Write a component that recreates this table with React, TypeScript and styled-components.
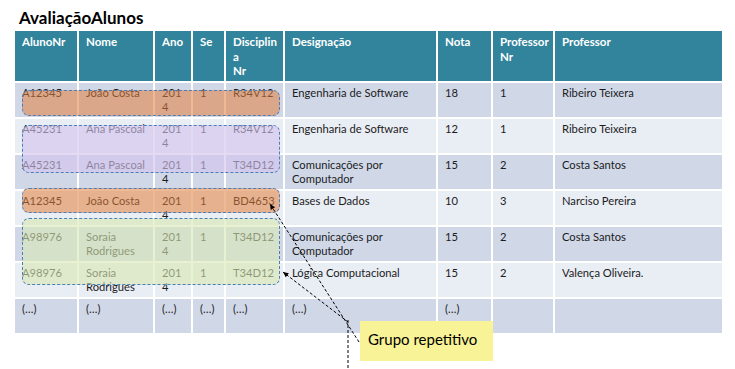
import styled, { createGlobalStyle } from "styled-components"

const GlobalStyle = createGlobalStyle`
  html, body {
    margin: 0;
    padding: 0;
    background: #ffffff;
  }
  body {
    font-family: Lato, "Open Sans", "Liberation Sans", sans-serif;
  }
`

const Page = styled.div`
  position: relative;
  width: 735px;
  height: 369px;
  overflow: hidden;
  padding: 6px 0 0 15px;
  box-sizing: border-box;
`

const Title = styled.h1`
  margin: 0 0 2px 4px;
  font-size: 17px;
  line-height: 23px;
  font-weight: bold;
  color: #000;
`

const Table = styled.div`
  display: grid;
  grid-template-columns: 62px 74px 36px 31px 57px 151px 53px 60px 167px;
  grid-template-rows: 50px repeat(7, 34px);
  gap: 2px;
  width: 707px;
  background: #ffffff;
`

const HeadCell = styled.div`
  background: #31849b;
  color: #ffffff;
  font-weight: bold;
  font-size: 11.5px;
  line-height: 14.5px;
  padding: 4px 7px 0;
  white-space: pre;
  overflow: hidden;
`

const Cell = styled.div<{ $dark: boolean }>`
  background: ${(p) => (p.$dark ? "#d0d8e8" : "#e9edf4")};
  color: #1c1c1c;
  font-size: 11.2px;
  line-height: 14px;
  padding: 3px 7px 0;
  white-space: pre;
  overflow: visible;
`

const Group = styled.div<{ $fill: string }>`
  position: absolute;
  left: 22px;
  width: 258px;
  box-sizing: border-box;
  border: 1px dashed #4a7ebb;
  border-radius: 7px;
  background: ${(p) => p.$fill};
`

const Callout = styled.div`
  position: absolute;
  left: 360px;
  top: 321px;
  width: 133px;
  height: 40px;
  box-sizing: border-box;
  padding: 9px 0 0 8px;
  background: #f8f396;
  color: #000;
  font-size: 15px;
  line-height: 18px;
`

const Arrows = styled.svg`
  position: absolute;
  left: 0;
  top: 0;
  pointer-events: none;
`

const headers = ["AlunoNr", "Nome", "Ano", "Se", "Disciplin\na\nNr", "Designação", "Nota", "Professor\nNr", "Professor"]

const rows = [
  ["A12345", "João Costa", "201\n4", "1", "R34V12", "Engenharia de Software", "18", "1", "Ribeiro Teixera"],
  ["A45231", "Ana Pascoal", "201\n4", "1", "R34V12", "Engenharia de Software", "12", "1", "Ribeiro Teixeira"],
  ["A45231", "Ana Pascoal", "201\n4", "1", "T34D12", "Comunicações por\nComputador", "15", "2", "Costa Santos"],
  ["A12345", "João Costa", "201\n4", "1", "BD4653", "Bases de Dados", "10", "3", "Narciso Pereira"],
  ["A98976", "Soraia\nRodrigues", "201\n4", "1", "T34D12", "Comunicações por\nComputador", "15", "2", "Costa Santos"],
  ["A98976", "Soraia\nRodrigues", "201\n4", "1", "T34D12", "Lógica Computacional", "15", "2", "Valença Oliveira."],
  ["(…)", "(…)", "(…)", "(…)", "(…)", "(…)", "(…)", "", ""],
]

const groups = [
  { top: 90, height: 26, fill: "rgba(226, 128, 60, 0.55)" },
  { top: 125, height: 48, fill: "rgba(212, 196, 238, 0.62)" },
  { top: 188, height: 25, fill: "rgba(226, 128, 60, 0.55)" },
  { top: 218, height: 67, fill: "rgba(216, 232, 178, 0.6)" },
]

const Arrow = ({ x1, y1, x2, y2, head }: { x1: number; y1: number; x2: number; y2: number; head?: boolean }) => {
  const a = Math.atan2(y2 - y1, x2 - x1)
  const s = 6
  const p1 = [x2 - s * Math.cos(a - 0.45), y2 - s * Math.sin(a - 0.45)]
  const p2 = [x2 - s * Math.cos(a + 0.45), y2 - s * Math.sin(a + 0.45)]
  return (
    <g>
      <line x1={x1} y1={y1} x2={x2} y2={y2} stroke="#000" strokeWidth="1" strokeDasharray="3 2" />
      {head && <polygon points={`${x2},${y2} ${p1[0]},${p1[1]} ${p2[0]},${p2[1]}`} fill="#000" />}
    </g>
  )
}

export default function App() {
  return (
    <>
      <GlobalStyle />
      <Page>
        <Title>AvaliaçãoAlunos</Title>
        <Table>
          {headers.map((h, i) => (
            <HeadCell key={i}>{h}</HeadCell>
          ))}
          {rows.map((r, ri) =>
            r.map((c, ci) => (
              <Cell key={`${ri}-${ci}`} $dark={ri % 2 === 0}>
                {c}
              </Cell>
            ))
          )}
        </Table>
        {groups.map((g, i) => (
          <Group key={i} $fill={g.fill} style={{ top: g.top, height: g.height }} />
        ))}
        <Callout>Grupo repetitivo</Callout>
        <Arrows width="735" height="369" viewBox="0 0 735 369">
          <Arrow x1={359} y1={342} x2={270} y2={204} head />
          <Arrow x1={348} y1={322} x2={283} y2={272} head />
          <Arrow x1={348} y1={320} x2={348} y2={369} />
        </Arrows>
      </Page>
    </>
  )
}
